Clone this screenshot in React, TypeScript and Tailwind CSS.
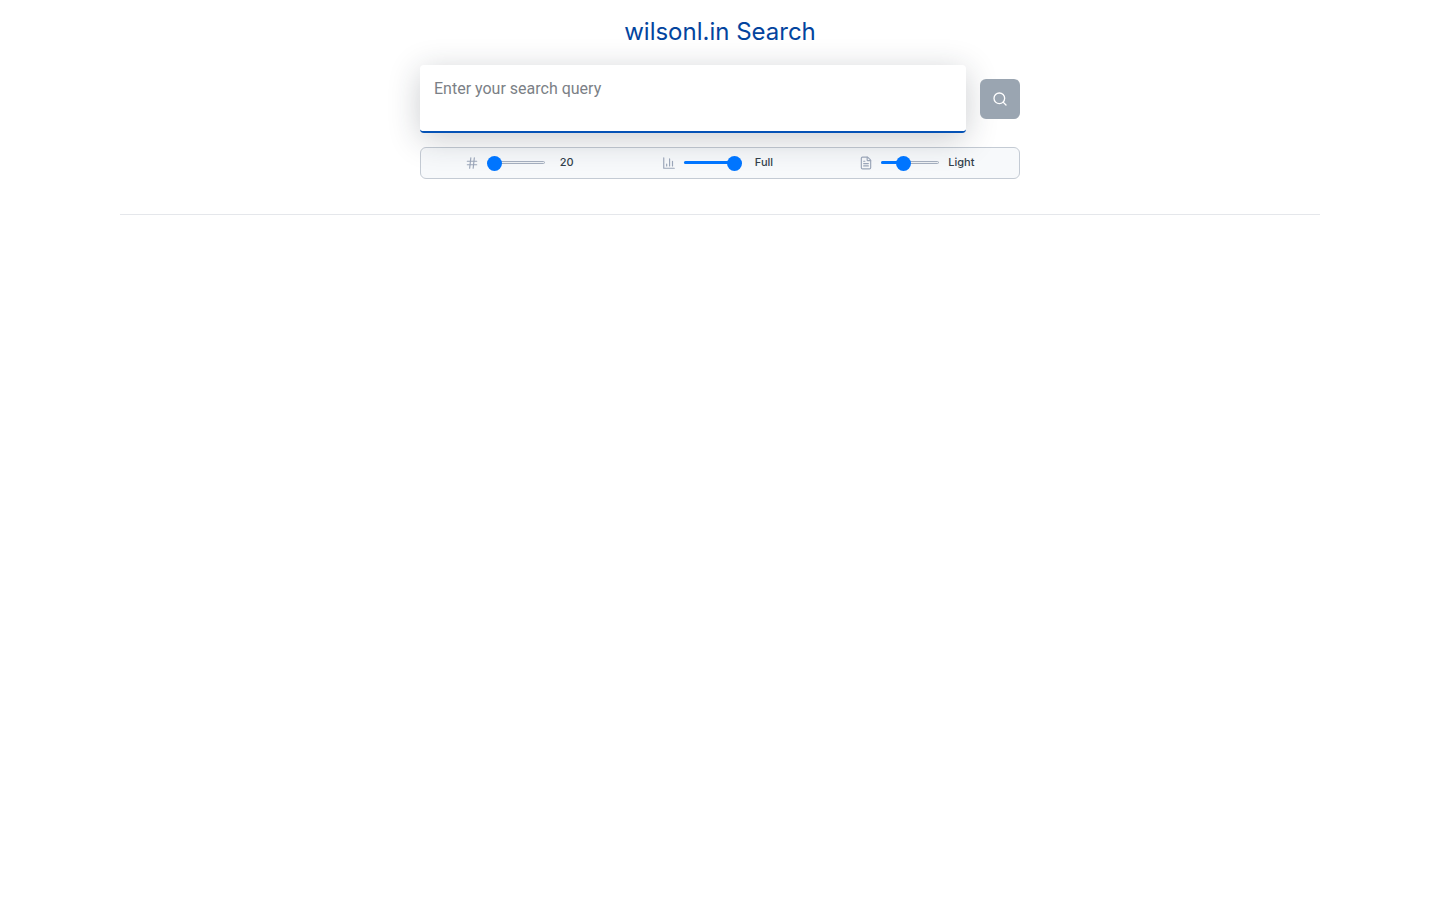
import { useState } from "react";
import type { ReactNode } from "react";
import { FileText, Hash, Search } from "lucide-react";

function ChartIcon() {
  return (
    <svg
      className="size-3.5 shrink-0"
      viewBox="0 0 24 24"
      fill="none"
      stroke="currentColor"
      strokeWidth="2"
      strokeLinecap="round"
      strokeLinejoin="round"
      aria-hidden="true"
    >
      <path d="M3 3v18h18M8 17v-3M13 17V5M18 17V9" />
    </svg>
  );
}

type OptionProps = {
  id: string;
  name: string;
  icon: ReactNode;
  max: number;
  initial: number;
  format: (value: number) => string;
};

function Option({ id, name, icon, max, initial, format }: OptionProps) {
  const [value, setValue] = useState(initial);
  const fill = `calc(7px + (100% - 14px) * ${value / max})`;
  return (
    <div className="flex items-center justify-center text-[#9aa5b8]">
      <label htmlFor={id} title={name} className="mr-2 flex">
        {icon}
      </label>
      <div className="mr-2 grid h-4 w-[58px] items-center">
        <div className="col-start-1 row-start-1 mb-0.5 h-[3px] rounded-full border border-[#a3adbd] bg-[#eceff2]" />
        <div
          className="col-start-1 row-start-1 mb-0.5 h-[3px] rounded-full bg-[#0075ff]"
          style={{ width: value > 0 ? fill : 0 }}
        />
        <input
          id={id}
          aria-label={name}
          type="range"
          min={0}
          max={max}
          value={value}
          onChange={(e) => setValue(Number(e.target.value))}
          className="col-start-1 row-start-1 h-4 w-full cursor-pointer appearance-none bg-transparent [&::-webkit-slider-thumb]:size-[15px] [&::-webkit-slider-thumb]:appearance-none [&::-webkit-slider-thumb]:rounded-full [&::-webkit-slider-thumb]:bg-[#0075ff]"
        />
      </div>
      <output htmlFor={id} className="w-7 pb-0.5 text-center text-[11px] leading-4 font-medium text-[#323f4b]">
        {format(value)}
      </output>
    </div>
  );
}

export default function App() {
  const [query, setQuery] = useState("");
  return (
    <div className="mx-auto max-w-[1200px] bg-white font-['Inter',sans-serif]">
      <header className="border-b border-[#e5e7eb] pt-4 pb-[35px]">
        <h1 className="text-center text-2xl leading-8 text-[#03449e]">wilsonl.in Search</h1>
        <form className="mx-auto mt-[17px] max-w-[600px]" onSubmit={(e) => e.preventDefault()}>
          <div className="flex items-center gap-3.5">
            <textarea
              aria-label="Search query"
              placeholder="Enter your search query"
              value={query}
              onChange={(e) => setQuery(e.target.value)}
              className="block h-[68px] min-w-0 flex-1 resize-none rounded border-b-2 border-[#0552b5] bg-white px-3.5 py-3 font-['Roboto',sans-serif] text-base leading-6 shadow-[0_6px_32px_rgba(31,41,51,0.23)] outline-none placeholder:text-[#7b7f86]"
            />
            <button
              type="submit"
              aria-label="Search"
              className="flex size-10 shrink-0 items-center justify-center rounded-md bg-[#9aa5b1] text-white"
            >
              <Search className="size-4" strokeWidth={2} />
            </button>
          </div>
          <div className="mt-3.5 grid h-8 grid-cols-3 rounded-md border border-[#c4cbd4] bg-[#f5f7fa]/80 px-[3px]">
            <Option
              id="count"
              name="Results"
              icon={<Hash className="size-3.5" strokeWidth={2} />}
              max={100}
              initial={0}
              format={(v) => String(v + 20)}
            />
            <Option
              id="quality"
              name="Ranking"
              icon={<ChartIcon />}
              max={2}
              initial={2}
              format={(v) => ["Off", "Light", "Full"][v]}
            />
            <Option
              id="content"
              name="Content"
              icon={<FileText className="size-3.5" strokeWidth={2} />}
              max={3}
              initial={1}
              format={(v) => ["Off", "Light", "Half", "Full"][v]}
            />
          </div>
        </form>
      </header>
    </div>
  );
}
